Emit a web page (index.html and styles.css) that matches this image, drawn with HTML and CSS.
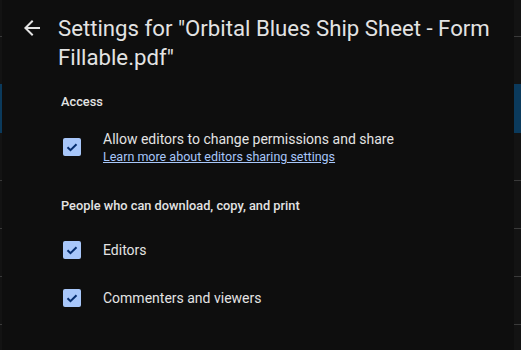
FILE: index.html
```html
<!DOCTYPE html>
<html lang="en">
<head>
    <meta charset="UTF-8">
    <title>Share settings</title>
    <link rel="stylesheet" href="styles.css">
</head>
<body>

    <div class="dialog">
        <div class="dialog-header">
            <button class="back-btn" aria-label="Back">
                <svg width="24" height="24" viewBox="0 0 24 24">
                    <path d="M20 11H7.83l5.59-5.59L12 4l-8 8 8 8 1.41-1.41L7.83 13H20v-2z" fill="#e3e3e3"/>
                </svg>
            </button>
            <h1 class="dialog-title">Settings for "Orbital Blues Ship Sheet - Form Fillable.pdf"</h1>
        </div>

        <div class="section">
            <h2 class="section-title">Access</h2>
            <label class="option option-access">
                <span class="checkbox"><svg width="18" height="18" viewBox="0 0 18 18"><path d="M4.5 9.2l3 3 6-6" fill="none" stroke="#062e6f" stroke-width="2"/></svg></span>
                <span class="option-text">
                    Allow editors to change permissions and share
                    <a class="learn-link" href="#">Learn more about editors sharing settings</a>
                </span>
            </label>
        </div>

        <div class="section">
            <h2 class="section-title">People who can download, copy, and print</h2>
            <div class="option-list">
                <label class="option">
                    <span class="checkbox"><svg width="18" height="18" viewBox="0 0 18 18"><path d="M4.5 9.2l3 3 6-6" fill="none" stroke="#062e6f" stroke-width="2"/></svg></span>
                    <span class="option-text">Editors</span>
                </label>
                <label class="option">
                    <span class="checkbox"><svg width="18" height="18" viewBox="0 0 18 18"><path d="M4.5 9.2l3 3 6-6" fill="none" stroke="#062e6f" stroke-width="2"/></svg></span>
                    <span class="option-text">Commenters and viewers</span>
                </label>
            </div>
        </div>
    </div>

</body>
</html>
```

FILE: styles.css
```css
body {
    margin: 0;
    height: 350px;
    overflow: hidden;
    font-family: Roboto, "Open Sans", sans-serif;
    color: #e3e3e3;
    background-color: #131313;
    /* page behind the dialog: row dividers and a selected row */
    background-image:
        linear-gradient(#0b3a5c, #0b3a5c),
        linear-gradient(#3a3a3a, #3a3a3a),
        linear-gradient(#3a3a3a, #3a3a3a),
        linear-gradient(#3a3a3a, #3a3a3a),
        linear-gradient(#3a3a3a, #3a3a3a),
        linear-gradient(#3a3a3a, #3a3a3a);
    background-repeat: no-repeat;
    background-size: 100% 49px, 100% 1px, 100% 1px, 100% 1px, 100% 1px, 100% 1px;
    background-position: 0 84px, 0 36px, 0 180px, 0 228px, 0 276px, 0 324px;
}

.dialog {
    margin-left: 2px;
    width: 512px;
    height: 350px;
    background: #0e0e0e;
}

.dialog-header {
    display: flex;
    align-items: flex-start;
    gap: 14px;
    padding: 14px 16px 0 18px;
}

.back-btn {
    background: none;
    border: none;
    padding: 0;
    width: 24px;
    height: 24px;
    margin-top: 2px;
    cursor: pointer;
}

.dialog-title {
    margin: 0;
    font-size: 22.2px;
    line-height: 29px;
    font-weight: 400;
    color: #e3e3e3;
}

.section {
    padding-left: 59px;
}

.section-title {
    margin: 20px 0 0;
    font-size: 12.8px;
    line-height: 20px;
    font-weight: 500;
    color: #e3e3e3;
}

.section + .section .section-title {
    margin-top: 14px;
}

.option-list {
    margin-top: 10px;
}

.option {
    display: flex;
    align-items: center;
    height: 48px;
    cursor: pointer;
}

.option-access {
    height: 70px;
}

.checkbox {
    width: 18px;
    height: 18px;
    margin-left: 2px;
    margin-right: 22px;
    border-radius: 2px;
    background: #a8c7fa;
    flex-shrink: 0;
}

.checkbox svg {
    display: block;
}

.option-text {
    font-size: 14px;
    line-height: 20px;
}

.learn-link {
    display: block;
    font-size: 12.5px;
    line-height: 16px;
    color: #a8c7fa;
}
```
